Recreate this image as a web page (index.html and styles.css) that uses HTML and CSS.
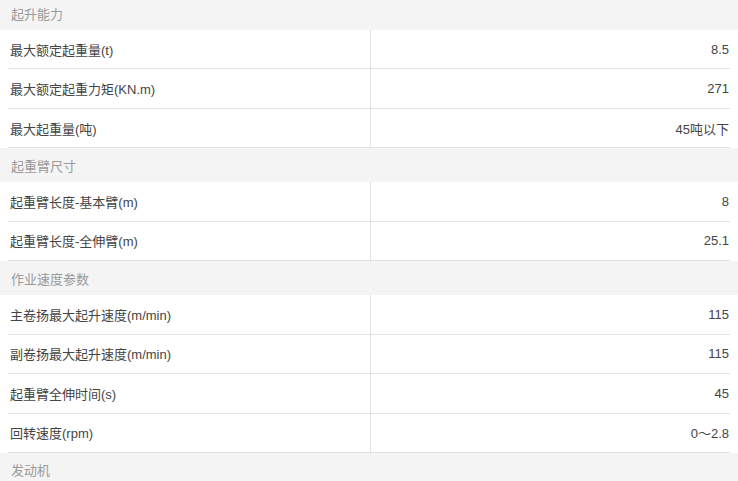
FILE: index.html
```html
<!DOCTYPE html>
<html lang="zh-CN">
<head>
<meta charset="utf-8">
<title>参数</title>
<link rel="stylesheet" href="styles.css">
</head>
<body>
<div class="spec">
  <div class="group-title">起升能力</div>
  <div class="row"><div class="label">最大额定起重量(t)</div><div class="value">8.5</div></div>
  <div class="row"><div class="label">最大额定起重力矩(KN.m)</div><div class="value">271</div></div>
  <div class="row"><div class="label">最大起重量(吨)</div><div class="value">45吨以下</div></div>
  <div class="group-title">起重臂尺寸</div>
  <div class="row"><div class="label">起重臂长度-基本臂(m)</div><div class="value">8</div></div>
  <div class="row"><div class="label">起重臂长度-全伸臂(m)</div><div class="value">25.1</div></div>
  <div class="group-title">作业速度参数</div>
  <div class="row"><div class="label">主卷扬最大起升速度(m/min)</div><div class="value">115</div></div>
  <div class="row"><div class="label">副卷扬最大起升速度(m/min)</div><div class="value">115</div></div>
  <div class="row"><div class="label">起重臂全伸时间(s)</div><div class="value">45</div></div>
  <div class="row"><div class="label">回转速度(rpm)</div><div class="value">0～2.8</div></div>
  <div class="group-title">发动机</div>
</div>
</body>
</html>
```
FILE: styles.css
```css
html, body {
  margin: 0;
  padding: 0;
  background: #ffffff;
  overflow: hidden;
}
.spec {
  margin-top: -4px;
  font-family: "Liberation Sans", "Noto Sans CJK SC", sans-serif;
  font-size: 13px;
  color: #444444;
}
.group-title {
  height: 34px;
  display: flex;
  align-items: center;
  padding-left: 11px;
  background: #f4f4f4;
  color: #9a9a9a;
}
.row {
  box-sizing: border-box;
  height: 39.45px;
  margin: 0 8px;
  display: flex;
  border-bottom: 1px solid #e2e2e2;
}
.label {
  width: 360px;
  padding-left: 2px;
  display: flex;
  align-items: center;
  border-right: 1px solid #e0e0e6;
}
.value {
  flex: 1;
  display: flex;
  align-items: center;
  justify-content: flex-end;
  padding-right: 1px;
}
```
